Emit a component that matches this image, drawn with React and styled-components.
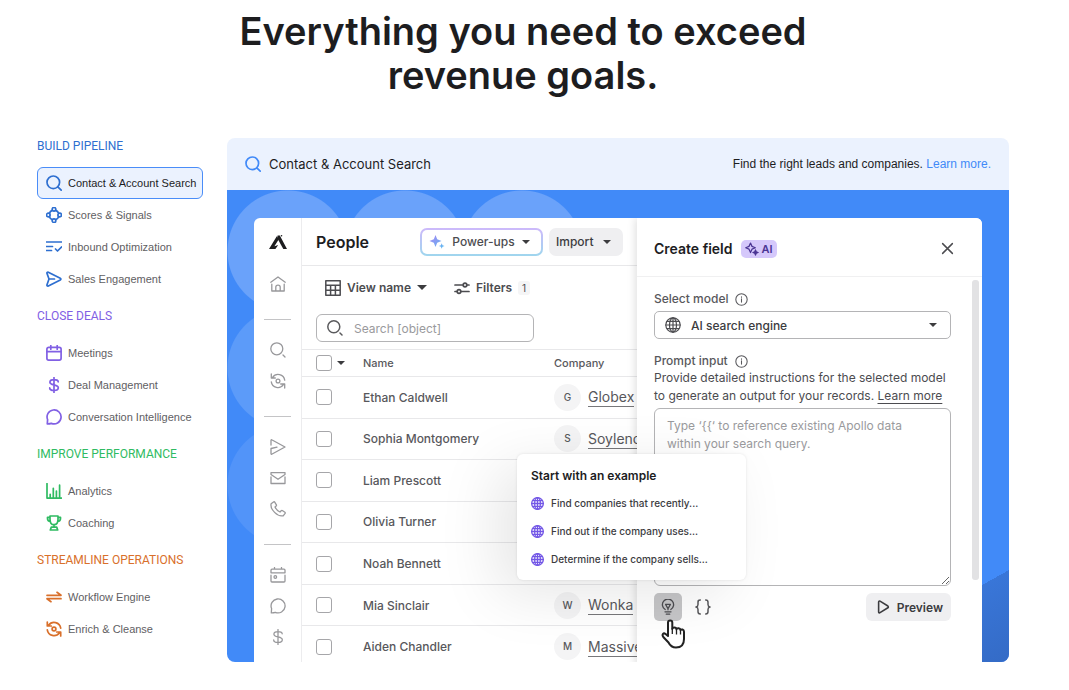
import React, { useState } from "react";
import styled, { createGlobalStyle } from "styled-components";

const icons = {
  search: (
    <>
      <circle cx='7.3' cy='7.3' r='6.3' />
      <path d='M11.8 11.8l3.4 3.4' />
    </>
  ),
  searchGap: (
    <>
      <circle cx='6.8' cy='6.8' r='6' />
      <path d='M13 13l2 2' />
    </>
  ),
  signals: (
    <>
      <circle cx='8' cy='2.3' r='1.8' />
      <circle cx='8' cy='13.7' r='1.8' />
      <circle cx='2.3' cy='8' r='1.8' />
      <circle cx='13.7' cy='8' r='1.8' />
      <path d='M6.3 3.4C4.8 3.9 3.9 4.8 3.4 6.3M9.7 3.4c1.5.5 2.4 1.4 2.9 2.9M3.4 9.7c.5 1.5 1.4 2.4 2.9 2.9M12.6 9.7c-.5 1.5-1.4 2.4-2.9 2.9' />
    </>
  ),
  inbound: <path d='M.5 3h15M.5 7.5h6M.5 11.5h5M9.5 10l2 2L15.5 8' />,
  send: (
    <path d='M1 2.4c-.3-.9.5-1.6 1.3-1.2l12 6c.8.4.8 1.3 0 1.7l-12 6c-.8.4-1.6-.3-1.3-1.2L3 8zM3 8h5.5' />
  ),
  sendThin: (
    <path d='M1 6V1.2c0-.4.4-.6.7-.4L15 8 1.7 15.2c-.3.2-.7 0-.7-.4V9.5l6-1.3' />
  ),
  calendar: (
    <>
      <rect x='.9' y='2.4' width='14.2' height='12.7' rx='1.8' />
      <path d='M1 6.7h14M4.8.6v3.6M11.2.6v3.6' />
    </>
  ),
  calendarDot: (
    <>
      <path d='M1 5.8V3.2c0-.6.4-1 1-1h12c.6 0 1 .4 1 1v2.6zM4.5.5v1.7M11.5.5v1.7M1 8.2V14c0 .6.4 1 1 1h12c.6 0 1-.4 1-1V8.2' />
      <circle cx='5.3' cy='10' r='1.3' />
    </>
  ),
  dollar: (
    <path d='M8 .5v15M12.2 4.8c0-1.5-1.8-2.2-4.2-2.2S3.9 3.5 3.9 5.2C3.9 8.8 12.3 7 12.3 10.7c0 1.8-1.9 2.7-4.3 2.7s-4.3-.9-4.3-2.5' />
  ),
  chat: (
    <path d='M1.3 14.9l.3-4.3A7 7 0 1 1 5.4 14.4c-1.3.4-2.7.6-4.1.5z' />
  ),
  analytics: (
    <path d='M1 .6v14.5h14.5M4.2 14.5v-3.2M7.3 14.5V5.3M10.4 14.5V8M13.6 14.5V2.2' />
  ),
  trophy: (
    <path d='M4 1h8v3.5C12 8 10.5 9.7 8 9.7S4 8 4 4.5zM4 2.3H1.5V3.6C1.5 5.4 2.6 6.4 4.4 6.4M12 2.3h2.5v1.3c0 1.8-1.1 2.8-2.9 2.8M8 9.7v2.3M5.3 12.1h5.4l1 2.9H4.3z' />
  ),
  arrows: <path d='M1 6.3H15L11 3.3M15 9.7H1L5 12.7' />,
  refresh: (
    <>
      <circle cx='8' cy='8' r='1.9' />
      <path d='M2.6 4.3A6.7 6.7 0 0 1 14.7 7.2M13.4 11.7A6.7 6.7 0 0 1 1.3 8.8M1.3 1v4h4M14.7 15v-4h-4' />
    </>
  ),
  home: (
    <path d='M.8 6.2L8 1l7.2 5.2M1.8 8.2V15h12.4V8.2M5.8 15v-3.8c0-2.8 4.4-2.8 4.4 0V15' />
  ),
  mail: <path d='M1 4.5V2.6h14v1.9L8 9.3zM1 7v6.5h14V7' />,
  phone: (
    <path d='M1.1 2.8L3.5.9c.4-.3.9-.2 1.2.2l1.7 2.7c.2.4.2.8-.2 1.1L5 6c1 2.2 2.7 3.9 5 5l1.2-1.3c.3-.3.7-.4 1.1-.2l2.6 1.7c.4.3.5.8.2 1.2l-1.9 2.4C7.5 16 0 8.5 1.1 2.8z' />
  ),
  table: (
    <path d='M.8.8h14.4v14.4H.8zM.8 5.3h14.4M.8 10.2h14.4M5.6 5.3v9.9M10.4 5.3v9.9' />
  ),
  filters: (
    <>
      <path d='M1 5h7.5M13 5h2M1 11.5h1.5M7.5 11.5H15' />
      <circle cx='11' cy='5' r='1.8' />
      <circle cx='5' cy='11.5' r='1.8' />
    </>
  ),
  globe: (
    <>
      <circle cx='8' cy='8' r='7.2' />
      <ellipse cx='8' cy='8' rx='3.5' ry='7.2' />
      <path d='M8 .8v14.4M.8 8h14.4M2 4.4h12M2 11.6h12' />
    </>
  ),
  info: (
    <>
      <circle cx='8' cy='8' r='7' />
      <path d='M8 7.2v4M8 4.5v.6' />
    </>
  ),
  close: <path d='M2 2l12 12M14 2L2 14' />,
  bulb: (
    <>
      <path d='M5.2 10.5A5.6 5.6 0 1 1 10.8 10.5M5 12.8h6M6.3 15.2h3.4' />
      <path d='M5.6 5.4h4.8L8 9.8zM8 9.8v1' />
    </>
  ),
  braces: (
    <path d='M5.3 1C3.3 1 3 1.8 3 3.2v2.3C3 7 2.5 7.7 1 8c1.5.3 2 1 2 2.5v2.3C3 14.2 3.3 15 5.3 15M10.7 1c2 0 2.3.8 2.3 2.2v2.3c0 1.5.5 2.2 2 2.5-1.5.3-2 1-2 2.5v2.3c0 1.4-.3 2.2-2.3 2.2' />
  ),
  play: (
    <path d='M3 2.3c0-.9.8-1.4 1.6-1l9 5.6c.7.5.7 1.6 0 2l-9 5.6C3.8 15 3 14.5 3 13.6z' />
  ),
  aiSpark: (
    <>
      <path d='M6.3 1.2L8 5l3.8 1.6L8 8.2l-1.7 3.9-1.7-3.9L.8 6.6 4.6 5z' />
      <path
        d='M12 9l.8 2.2 2.2.8-2.2.8L12 15l-.8-2.2L9 12l2.2-.8z'
        fill='currentColor'
      />
    </>
  ),
};

const Icon = ({ name, size = 16, weight = 1.5 }) => (
  <IconSvg
    width={size}
    height={size}
    viewBox='0 0 16 16'
    fill='none'
    stroke='currentColor'
    strokeWidth={weight}
    strokeLinecap='round'
    strokeLinejoin='round'
    aria-hidden='true'
  >
    {icons[name]}
  </IconSvg>
);

const Logo = () => (
  <svg width='18' height='16' viewBox='0 0 18 16' fill='#1d1d1f'>
    <path d='M0 15L7.8 2.2l1.9 3.2L5.4 12.2l3.8-1.3L6.4 15z' />
    <path d='M8.6 1.6h2.2L18 15h-3.7L8.2 4z' />
    <circle cx='12.5' cy='1.8' r='.8' />
  </svg>
);

const Sparkles = () => (
  <svg width='16' height='16' viewBox='0 0 16 16' aria-hidden='true'>
    <defs>
      <linearGradient id='spark' x1='0' y1='0' x2='1' y2='1'>
        <stop offset='0' stopColor='#a987f5' />
        <stop offset='1' stopColor='#56bbf0' />
      </linearGradient>
    </defs>
    <path
      fill='url(#spark)'
      d='M6.5 1l1.7 4.3L12.5 7 8.2 8.7 6.5 13 4.8 8.7.5 7l4.3-1.7zM12.7 9.2l.8 2 2 .8-2 .8-.8 2-.8-2-2-.8 2-.8z'
    />
  </svg>
);

const Hand = () => (
  <HandSvg width='26' height='30' viewBox='0 0 26 30' aria-hidden='true'>
    <path
      d='M8 17V3.6C8 .7 12.3.7 12.3 3.6V10c.2-2 4-2 4.2.3.5-1.5 3.7-1.3 4 .8.8-1.2 3.5-.8 3.5 1.7V20c0 5-2.5 8.5-8 8.5-4.5 0-6-2-7.5-5L3.3 18c-1.8-2.8.2-4.5 2.3-3z'
      fill='#fff'
      stroke='#222'
      strokeWidth='2'
      strokeLinejoin='round'
    />
    <path
      d='M12.3 9v6M16.5 10.5v5M20.5 11.5v4'
      stroke='#222'
      strokeWidth='1.3'
    />
  </HandSvg>
);

const sections = [
  {
    title: "Build pipeline",
    color: "#2e6fd0",
    items: [
      ["search", "Contact & Account Search"],
      ["signals", "Scores & Signals"],
      ["inbound", "Inbound Optimization"],
      ["send", "Sales Engagement"],
    ],
  },
  {
    title: "Close deals",
    color: "#8160e4",
    items: [
      ["calendar", "Meetings"],
      ["dollar", "Deal Management"],
      ["chat", "Conversation Intelligence"],
    ],
  },
  {
    title: "Improve performance",
    color: "#2fbb62",
    items: [
      ["analytics", "Analytics"],
      ["trophy", "Coaching"],
    ],
  },
  {
    title: "Streamline operations",
    color: "#d9702b",
    items: [
      ["arrows", "Workflow Engine"],
      ["refresh", "Enrich & Cleanse"],
    ],
  },
];

const railGroups = [
  ["home"],
  ["searchGap", "refresh"],
  ["sendThin", "mail", "phone"],
  ["calendarDot", "chat", "dollar"],
];

const people = [
  { name: "Ethan Caldwell", company: "Globex" },
  { name: "Sophia Montgomery", company: "Soylenc" },
  { name: "Liam Prescott" },
  { name: "Olivia Turner" },
  { name: "Noah Bennett" },
  { name: "Mia Sinclair", company: "Wonka" },
  { name: "Aiden Chandler", company: "Massive" },
];

const examples = [
  "Find companies that recently...",
  "Find out if the company uses...",
  "Determine if the company sells...",
];

const App = () => {
  const [active, setActive] = useState("Contact & Account Search");

  return (
    <Page>
      <GlobalStyle />
      <Title>Everything you need to exceed revenue goals.</Title>
      <Layout>
        <Sidebar>
          {sections.map((section) => (
            <Section key={section.title}>
              <SectionTitle $color={section.color}>{section.title}</SectionTitle>
              {section.items.map(([icon, label]) => (
                <Tab
                  key={label}
                  type='button'
                  $active={active === label}
                  $color={section.color}
                  onClick={() => setActive(label)}
                >
                  <Icon name={icon} weight={1.7} />
                  <span>{label}</span>
                </Tab>
              ))}
            </Section>
          ))}
        </Sidebar>

        <Panel>
          <PanelHeader>
            <PanelName>
              <Icon name='search' weight={1.7} />
              Contact &amp; Account Search
            </PanelName>
            <PanelHint>
              Find the right leads and companies.{" "}
              <a href='#learn'>Learn more.</a>
            </PanelHint>
          </PanelHeader>
          <Stage>
            <Mock>
              <Rail>
                <Brand>
                  <Logo />
                </Brand>
                {railGroups.map((group) => (
                  <RailGroup key={group[0]}>
                    {group.map((name) => (
                      <RailLink key={name} href={`#${name}`} aria-label={name}>
                        <Icon name={name} weight={1.3} />
                      </RailLink>
                    ))}
                  </RailGroup>
                ))}
              </Rail>

              <People>
                <TopBar>
                  <PageName>People</PageName>
                  <PowerButton type='button'>
                    <Sparkles />
                    Power-ups
                    <Caret />
                  </PowerButton>
                  <ImportButton type='button'>
                    Import
                    <Caret />
                  </ImportButton>
                </TopBar>
                <ViewBar>
                  <PlainButton type='button'>
                    <Icon name='table' />
                    View name
                    <Caret $wide />
                  </PlainButton>
                  <PlainButton type='button'>
                    <Icon name='filters' weight={1.7} />
                    Filters
                    <Badge>1</Badge>
                  </PlainButton>
                </ViewBar>
                <SearchBox>
                  <Icon name='searchGap' />
                  <input
                    type='text'
                    aria-label='Search'
                    placeholder='Search [object]'
                  />
                </SearchBox>
                <Table>
                  <thead>
                    <tr>
                      <th>
                        <CheckAll>
                          <Check type='checkbox' aria-label='Select all' />
                          <Caret />
                        </CheckAll>
                      </th>
                      <th>Name</th>
                      <th>Company</th>
                    </tr>
                  </thead>
                  <tbody>
                    {people.map(({ name, company }) => (
                      <tr key={name}>
                        <td>
                          <Check type='checkbox' aria-label={name} />
                        </td>
                        <td>{name}</td>
                        <td>
                          {company && (
                            <Company>
                              <Avatar>{company[0]}</Avatar>
                              <a href='#company'>{company}</a>
                            </Company>
                          )}
                        </td>
                      </tr>
                    ))}
                  </tbody>
                </Table>
              </People>

              <Drawer>
                <DrawerHeader>
                  <h3>Create field</h3>
                  <AiTag>
                    <Icon name='aiSpark' size={14} weight={1.4} />
                    AI
                  </AiTag>
                  <CloseButton type='button' aria-label='Close'>
                    <Icon name='close' size={13} weight={1.8} />
                  </CloseButton>
                </DrawerHeader>
                <DrawerMain>
                  <Form>
                    <Label htmlFor='model'>
                      Select model
                      <Icon name='info' size={13} weight={1.3} />
                    </Label>
                    <SelectBox>
                      <Icon name='globe' weight={1.2} />
                      <select id='model'>
                        <option>AI search engine</option>
                      </select>
                      <Caret />
                    </SelectBox>
                    <Label htmlFor='prompt'>
                      Prompt input
                      <Icon name='info' size={13} weight={1.3} />
                    </Label>
                    <Help>
                      Provide detailed instructions for the selected model to
                      generate an output for your records.{" "}
                      <a href='#help'>Learn more</a>
                    </Help>
                    <Prompt
                      id='prompt'
                      placeholder='Type ‘{{‘ to reference existing Apollo data within your search query.'
                    />
                    <Tools>
                      <BulbWrap>
                        <BulbButton type='button' aria-label='Examples'>
                          <Icon name='bulb' weight={1.3} />
                        </BulbButton>
                        <Hand />
                        <Popover>
                          <h4>Start with an example</h4>
                          {examples.map((text) => (
                            <Example key={text} type='button'>
                              <Icon name='globe' size={13} weight={1.6} />
                              <span>{text}</span>
                            </Example>
                          ))}
                        </Popover>
                      </BulbWrap>
                      <BraceButton type='button' aria-label='Variables'>
                        <Icon name='braces' />
                      </BraceButton>
                      <PreviewButton type='button'>
                        <Icon name='play' size={14} weight={1.8} />
                        Preview
                      </PreviewButton>
                    </Tools>
                  </Form>
                  <ScrollThumb />
                </DrawerMain>
              </Drawer>
            </Mock>
          </Stage>
        </Panel>
      </Layout>
    </Page>
  );
};

export default App;

const GlobalStyle = createGlobalStyle`
  * {
    box-sizing: border-box;
  }

  body {
    margin: 0;
    background: #fff;
    color: #1d1d1f;
    font-family: Inter, "Liberation Sans", sans-serif;
  }

  button,
  input,
  select,
  textarea {
    font-family: inherit;
  }

  button {
    margin: 0;
    padding: 0;
    border: none;
    background: none;
    cursor: pointer;
  }
`;

const Page = styled.main`
  padding: 9px 60px 28px 37px;
`;
const Title = styled.h1`
  max-width: 640px;
  margin: 0 auto 41px;
  font-size: 38px;
  font-weight: 600;
  line-height: 44px;
  text-align: center;
`;
const Layout = styled.div`
  display: grid;
  grid-template-columns: 166px minmax(0, 1fr);
  gap: 24px;
  align-items: start;
`;

/* sidebar */
const Sidebar = styled.nav`
  display: flex;
  flex-direction: column;
  gap: 13px;
`;
const Section = styled.section`
  display: flex;
  flex-direction: column;
`;
const SectionTitle = styled.h2`
  margin: 0 0 13px;
  font-family: Roboto, sans-serif;
  font-size: 12px;
  font-weight: 400;
  line-height: 16px;
  text-transform: uppercase;
  white-space: nowrap;
  color: ${({ $color }) => $color};
`;
const Tab = styled.button`
  display: flex;
  align-items: center;
  gap: 6px;
  height: 32px;
  padding: 0 5px 0 8px;
  border: 1px solid ${({ $active }) => ($active ? "#4a8df8" : "transparent")};
  border-radius: 6px;
  background: ${({ $active }) => ($active ? "#ebf2fe" : "transparent")};
  color: ${({ $color }) => $color};

  span {
    font-family: "Liberation Sans", sans-serif;
    font-size: 11px;
    line-height: 16px;
    white-space: nowrap;
    color: ${({ $active }) => ($active ? "#1d1d1f" : "#5f6063")};
  }
`;
const IconSvg = styled.svg`
  flex: none;
  display: block;
`;

/* feature panel */
const Panel = styled.section`
  border-radius: 8px;
  overflow: hidden;
`;
const PanelHeader = styled.header`
  display: flex;
  align-items: center;
  justify-content: space-between;
  height: 52px;
  padding: 0 18px;
  background: #ebf2fe;
`;
const PanelName = styled.div`
  display: flex;
  align-items: center;
  gap: 8px;
  font-size: 13px;

  svg {
    color: #418af8;
  }
`;
const PanelHint = styled.p`
  margin: 0;
  font-family: "Liberation Sans", sans-serif;
  font-size: 12px;

  a {
    color: #418af8;
    text-decoration: none;
  }
`;
const Stage = styled.div`
  padding: 28px 27px 0;
  background:
    linear-gradient(151deg, transparent 82%, #3976d8 82%, #346bc6) right bottom /
      200px 400px no-repeat,
    radial-gradient(circle at 61px 61px, #6aa2fa 60px, transparent 61px) 0 0 /
      117px 117px no-repeat,
    radial-gradient(circle at 61px 61px, #6aa2fa 60px, transparent 61px) 117px 0 /
      122px 122px no-repeat,
    radial-gradient(circle at 61px 61px, #6aa2fa 60px, transparent 61px) 234px 0 /
      122px 122px no-repeat,
    radial-gradient(circle at 61px 61px, #5c9bf9 60px, transparent 61px) 0 117px /
      122px 122px no-repeat,
    radial-gradient(circle at 61px 61px, #5294f9 60px, transparent 61px) 0 234px /
      122px 122px no-repeat,
    #418af8;
`;
const Mock = styled.div`
  display: grid;
  grid-template-columns: 48px minmax(0, 1fr) 345px;
  max-height: 444px;
  border-radius: 6px 6px 0 0;
  background: #fff;
  overflow: hidden;
`;

/* icon rail */
const Rail = styled.nav`
  display: flex;
  flex-direction: column;
  border-right: 1px solid #ececee;
`;
const Brand = styled.div`
  display: flex;
  justify-content: center;
  padding: 16px 0 18px;
`;
const RailGroup = styled.div`
  display: flex;
  flex-direction: column;
  margin: 0 10px;

  & + & {
    margin-top: 20px;
    padding-top: 14px;
    border-top: 1px solid #c4c4c6;
  }
`;
const RailLink = styled.a`
  display: flex;
  align-items: center;
  justify-content: center;
  height: 31px;
  color: #98989b;
`;

/* people list */
const People = styled.div`
  overflow: hidden;
  white-space: nowrap;
`;
const TopBar = styled.div`
  display: flex;
  align-items: center;
  height: 48px;
  padding: 0 14px;
  border-bottom: 1px solid #e8e8ea;
`;
const PageName = styled.h2`
  margin: 0 auto 0 0;
  font-size: 16px;
  font-weight: 600;
`;
const Caret = styled.i`
  flex: none;
  width: 0;
  height: 0;
  border: ${({ $wide }) => ($wide ? 5 : 4)}px solid transparent;
  border-top-color: #3c3c3f;
  border-bottom: 0;
`;
const PowerButton = styled.button`
  display: flex;
  align-items: center;
  justify-content: space-between;
  width: 123px;
  height: 28px;
  padding: 0 11px 0 7px;
  border: 2px solid transparent;
  border-radius: 7px;
  background:
    linear-gradient(#fff, #fff) padding-box,
    linear-gradient(#cdb9fb, #9fd6ee) border-box;
  font-size: 12px;
  font-weight: 500;
  color: #4c4c50;
`;
const ImportButton = styled.button`
  display: flex;
  align-items: center;
  justify-content: space-between;
  width: 74px;
  height: 28px;
  margin-left: 6px;
  padding: 0 12px 0 7px;
  border-radius: 7px;
  background: #efeff1;
  font-size: 12px;
  font-weight: 500;
  color: #3c3c3f;
`;
const ViewBar = styled.div`
  display: flex;
  align-items: center;
  gap: 27px;
  height: 43px;
  padding-left: 23px;
`;
const PlainButton = styled.button`
  display: flex;
  align-items: center;
  gap: 6px;
  font-size: 12px;
  font-weight: 600;
  color: #4c4c50;
`;
const Badge = styled.span`
  padding: 0 4px;
  border-radius: 3px;
  background: #f5f5f6;
  font-size: 10px;
  font-weight: 400;
  line-height: 14px;
`;
const SearchBox = styled.div`
  display: flex;
  align-items: center;
  gap: 11px;
  width: 218px;
  height: 28px;
  margin: 5px 14px 7px;
  padding: 0 10px;
  border: 1px solid #b4b4b6;
  border-radius: 6px;
  color: #5a5a5d;

  input {
    flex: 1;
    min-width: 0;
    padding: 0;
    border: none;
    outline: none;
    font-size: 12px;
    color: #3c3c3f;
  }

  input::placeholder {
    color: #9a9a9d;
  }
`;
const Table = styled.table`
  width: 420px;
  height: 319px;
  border-collapse: collapse;
  table-layout: fixed;
  border-top: 1px solid #e8e8ea;
  font-size: 12px;
  color: #58585c;

  th,
  td {
    padding: 0;
    border-bottom: 1px solid #e8e8ea;
    text-align: left;
    vertical-align: middle;
    font-weight: 500;
  }

  td {
    height: 41px;
  }

  th {
    height: 27px;
    font-size: 11px;
  }

  th:first-child {
    width: 61px;
  }

  th:nth-child(2) {
    width: 191px;
  }

  td:first-child,
  th:first-child {
    padding-left: 14px;
  }
`;
const CheckAll = styled.div`
  display: flex;
  align-items: center;
  gap: 5px;
`;
const Check = styled.input`
  appearance: none;
  display: block;
  width: 16px;
  height: 16px;
  margin: 0;
  border: 1px solid #a6a6a9;
  border-radius: 3px;
  background: #fff;

  &:checked {
    background: #418af8;
  }
`;
const Company = styled.div`
  display: flex;
  align-items: center;
  gap: 7px;

  a {
    border-bottom: 1px solid #77777a;
    font-size: 14px;
    font-weight: 400;
    line-height: 19px;
    color: #58585c;
    text-decoration: none;
  }
`;
const Avatar = styled.span`
  flex: none;
  width: 27px;
  height: 27px;
  border-radius: 50%;
  background: #f4f4f5;
  font-size: 10px;
  line-height: 27px;
  text-align: center;
`;

/* create field drawer */
const Drawer = styled.aside`
  position: relative;
  background: #fff;
  box-shadow: -2px 0 8px rgba(0, 0, 0, 0.12);
`;
const DrawerHeader = styled.header`
  display: flex;
  align-items: center;
  gap: 8px;
  height: 59px;
  padding: 3px 28px 0 17px;
  border-bottom: 1px solid #f0f0f1;

  h3 {
    margin: 0;
    font-size: 14px;
    font-weight: 600;
  }
`;
const AiTag = styled.span`
  display: flex;
  align-items: center;
  gap: 3px;
  height: 18px;
  padding: 0 4px;
  border-radius: 5px;
  background: #d5c8fb;
  font-size: 11px;
  font-weight: 600;
  color: #4b3594;
`;
const CloseButton = styled.button`
  margin-left: auto;
  color: #4c4c50;
`;
const DrawerMain = styled.div`
  display: flex;
  padding: 3px 3px 0 17px;
`;
const ScrollThumb = styled.div`
  width: 7px;
  height: 300px;
  margin-left: auto;
  border-radius: 3px;
  background: #e2e2e4;
`;
const Form = styled.form`
  display: flex;
  flex-direction: column;
  flex: 1;
  padding: 11px 21px 0 0;
`;
const Label = styled.label`
  display: flex;
  align-items: center;
  gap: 7px;
  font-size: 12px;
  font-weight: 500;
  line-height: 16px;
  color: #58585c;
`;
const SelectBox = styled.div`
  display: flex;
  align-items: center;
  gap: 10px;
  height: 28px;
  margin: 4px 0 14px;
  padding: 0 13px 0 10px;
  border: 1px solid #b4b4b6;
  border-radius: 5px;
  color: #4c4c50;

  select {
    flex: 1;
    appearance: none;
    padding: 0;
    border: none;
    outline: none;
    background: none;
    font-size: 12px;
    font-weight: 500;
    color: #3c3c3f;
  }
`;
const Help = styled.p`
  margin: 0 0 3px;
  font-size: 12px;
  line-height: 18px;
  color: #4c4c50;

  a {
    color: inherit;
    text-underline-offset: 3px;
  }
`;
const Prompt = styled.textarea`
  height: 178px;
  padding: 8px 12px;
  border: 1px solid #b4b4b6;
  border-radius: 6px;
  outline: none;
  font-size: 12px;
  line-height: 18px;
  color: #3c3c3f;

  &::placeholder {
    color: #9a9a9d;
  }
`;
const Tools = styled.div`
  display: flex;
  align-items: center;
  gap: 13px;
  margin-top: 7px;
`;
const BulbWrap = styled.div`
  position: relative;
`;
const BulbButton = styled.button`
  display: flex;
  align-items: center;
  justify-content: center;
  width: 28px;
  height: 28px;
  border-radius: 5px;
  background: #c6c6c8;
  color: #4c4c50;
`;
const BraceButton = styled.button`
  color: #5a5a5d;
`;
const PreviewButton = styled.button`
  display: flex;
  align-items: center;
  gap: 7px;
  height: 28px;
  margin-left: auto;
  padding: 0 8px 0 10px;
  border-radius: 6px;
  background: #efeff1;
  font-size: 12px;
  font-weight: 600;
  color: #3c3c3f;
`;
const HandSvg = styled.svg`
  position: absolute;
  top: 26px;
  left: 6px;
  pointer-events: none;
`;
const Popover = styled.div`
  position: absolute;
  bottom: 41px;
  left: -137px;
  display: flex;
  flex-direction: column;
  align-items: flex-start;
  width: 229px;
  padding: 13px 14px 7px;
  border-radius: 6px;
  background: #fff;
  box-shadow:
    0 0 3px rgba(0, 0, 0, 0.1),
    -20px 14px 60px rgba(0, 0, 0, 0.1);

  h4 {
    margin: 0 0 4px;
    font-size: 12px;
    font-weight: 600;
    line-height: 18px;
  }
`;
const Example = styled.button`
  display: flex;
  align-items: center;
  gap: 7px;
  height: 28px;
  color: #7357e6;

  span {
    font-size: 10px;
    font-weight: 500;
    white-space: nowrap;
    color: #3c3c3f;
  }
`;
